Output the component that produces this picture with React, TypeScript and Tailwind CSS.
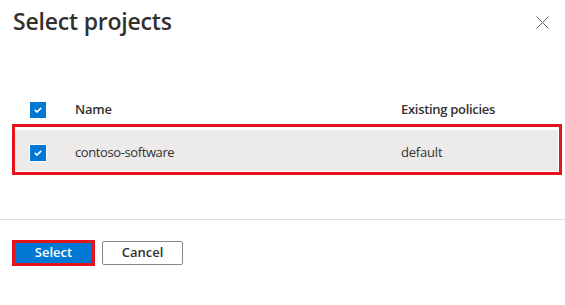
import React from "react";

const CheckBox = ({ ring = false }: { ring?: boolean }) => (
  <div
    className={
      "flex h-4 w-4 items-center justify-center bg-[#0078d4] " +
      (ring ? "ring-1 ring-white" : "")
    }
  >
    <svg width="10" height="10" viewBox="0 0 10 10" fill="none">
      <path d="M2.3 5.4 L4.1 7 L7.7 3.4" stroke="#ffffff" strokeWidth="1.7" strokeLinecap="round" strokeLinejoin="round" />
    </svg>
  </div>
);

export default function App() {
  return (
    <div
      className="h-[305px] w-[565px] overflow-hidden bg-white text-[#323130]"
      style={{ fontFamily: '"Open Sans", "Noto Sans", sans-serif' }}
    >
      {/* Header */}
      <div className="flex items-start justify-between pt-[6px] pl-[13px] pr-[16px]">
        <h1 className="text-[23px] leading-[31px] font-semibold tracking-[-0.2px]">Select projects</h1>
        <button className="mt-[10px]">
          <svg width="13" height="13" viewBox="0 0 13 13">
            <path d="M0.5 0.5 L12.5 12.5 M12.5 0.5 L0.5 12.5" stroke="#605e5c" strokeWidth="1" />
          </svg>
        </button>
      </div>

      {/* Table */}
      <div className="mt-[59px] px-[12px]">
        <div className="flex h-[28px] items-center pl-[18px]">
          <CheckBox />
          <div className="ml-[29px] w-[326px] text-[13px] font-semibold tracking-[-0.2px]">Name</div>
          <div className="text-[13px] font-semibold tracking-[-0.3px]">Existing policies</div>
        </div>
        <div className="w-[550px] border-[3px] border-[#e3151b] pt-[3px] pr-px pb-px">
          <div className="flex h-[41px] items-center bg-[#edebe9] pt-[5px] pl-[15px]">
            <CheckBox ring />
            <div className="ml-[29px] w-[326px] text-[13px] tracking-[-0.4px]">contoso-software</div>
            <div className="text-[13px] tracking-[-0.2px]">default</div>
          </div>
        </div>
      </div>

      <div className="mt-[44px] h-px w-full bg-[#dcdcdc]" />

      {/* Footer */}
      <div className="mt-[20px] flex items-center pl-[12px]">
        <div className="h-[26px] w-[83px] border-[3px] border-[#e3151b]">
          <button className="flex h-full w-full items-center justify-center bg-[#0078d4] text-[13px] font-semibold text-white">
            Select
          </button>
        </div>
        <button className="ml-[7px] flex h-[24px] w-[81px] items-center justify-center rounded-[2px] border border-[#8a8886] text-[13px] font-semibold">
          Cancel
        </button>
      </div>
    </div>
  );
}
